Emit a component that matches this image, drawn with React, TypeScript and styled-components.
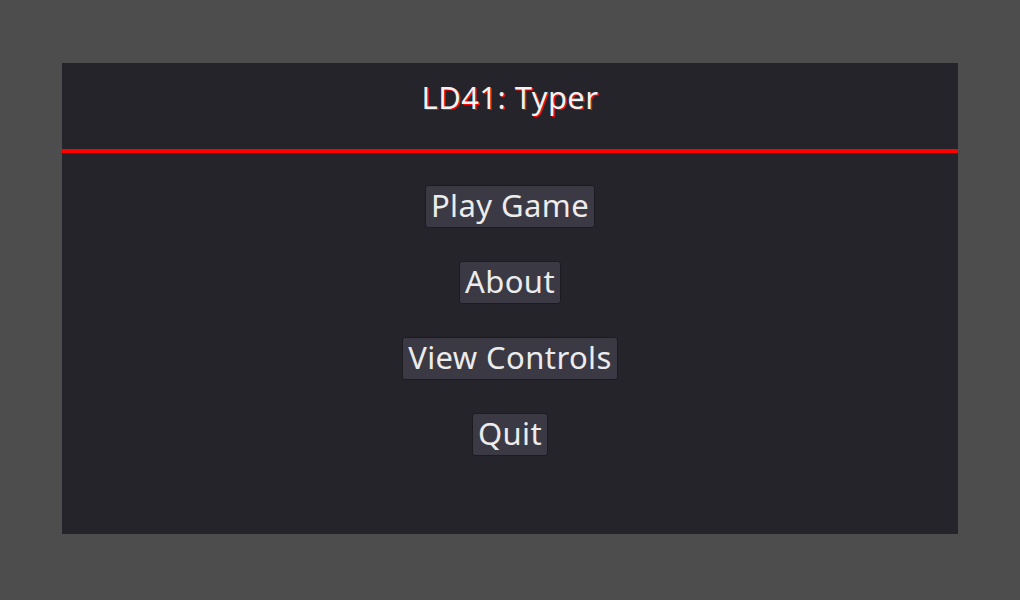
import React from 'react';
import styled, { createGlobalStyle } from 'styled-components';

const GlobalStyle = createGlobalStyle`
  html, body {
    margin: 0;
    padding: 0;
    background: #4d4d4d;
  }
  body {
    font-family: "Noto Sans", "Open Sans", sans-serif;
  }
`;

const Screen = styled.div`
  width: 1020px;
  height: 600px;
  box-sizing: border-box;
  padding: 63px 62px 66px;
  display: flex;
`;

const Panel = styled.div`
  flex: 1;
  background: #25242a;
  display: flex;
  flex-direction: column;
`;

const Header = styled.header`
  height: 86px;
  display: flex;
  align-items: center;
  justify-content: center;
  border-bottom: 4px solid #ff0000;
`;

const Title = styled.h1`
  margin: 0 0 17px;
  font-size: 31px;
  font-weight: 400;
  letter-spacing: 0.4px;
  color: #f2f2f2;
  text-shadow: 1px 1px 0 #ff0000;
  line-height: 1;
`;

const Menu = styled.nav`
  display: flex;
  flex-direction: column;
  align-items: center;
  gap: 33px;
  padding-top: 32px;
`;

const MenuButton = styled.button`
  height: 43px;
  box-sizing: border-box;
  padding: 0 5px 2px;
  border: 1px solid #1c1b20;
  border-radius: 3px;
  background: #3b3a44;
  color: #ececec;
  font-family: inherit;
  font-size: 31px;
  letter-spacing: 0.4px;
  line-height: 1;
  cursor: pointer;
`;

const items = ['Play Game', 'About', 'View Controls', 'Quit'];

export default function App() {
  return (
    <>
      <GlobalStyle />
      <Screen>
        <Panel>
          <Header>
            <Title>LD41: Typer</Title>
          </Header>
          <Menu>
            {items.map((label) => (
              <MenuButton key={label}>{label}</MenuButton>
            ))}
          </Menu>
        </Panel>
      </Screen>
    </>
  );
}
